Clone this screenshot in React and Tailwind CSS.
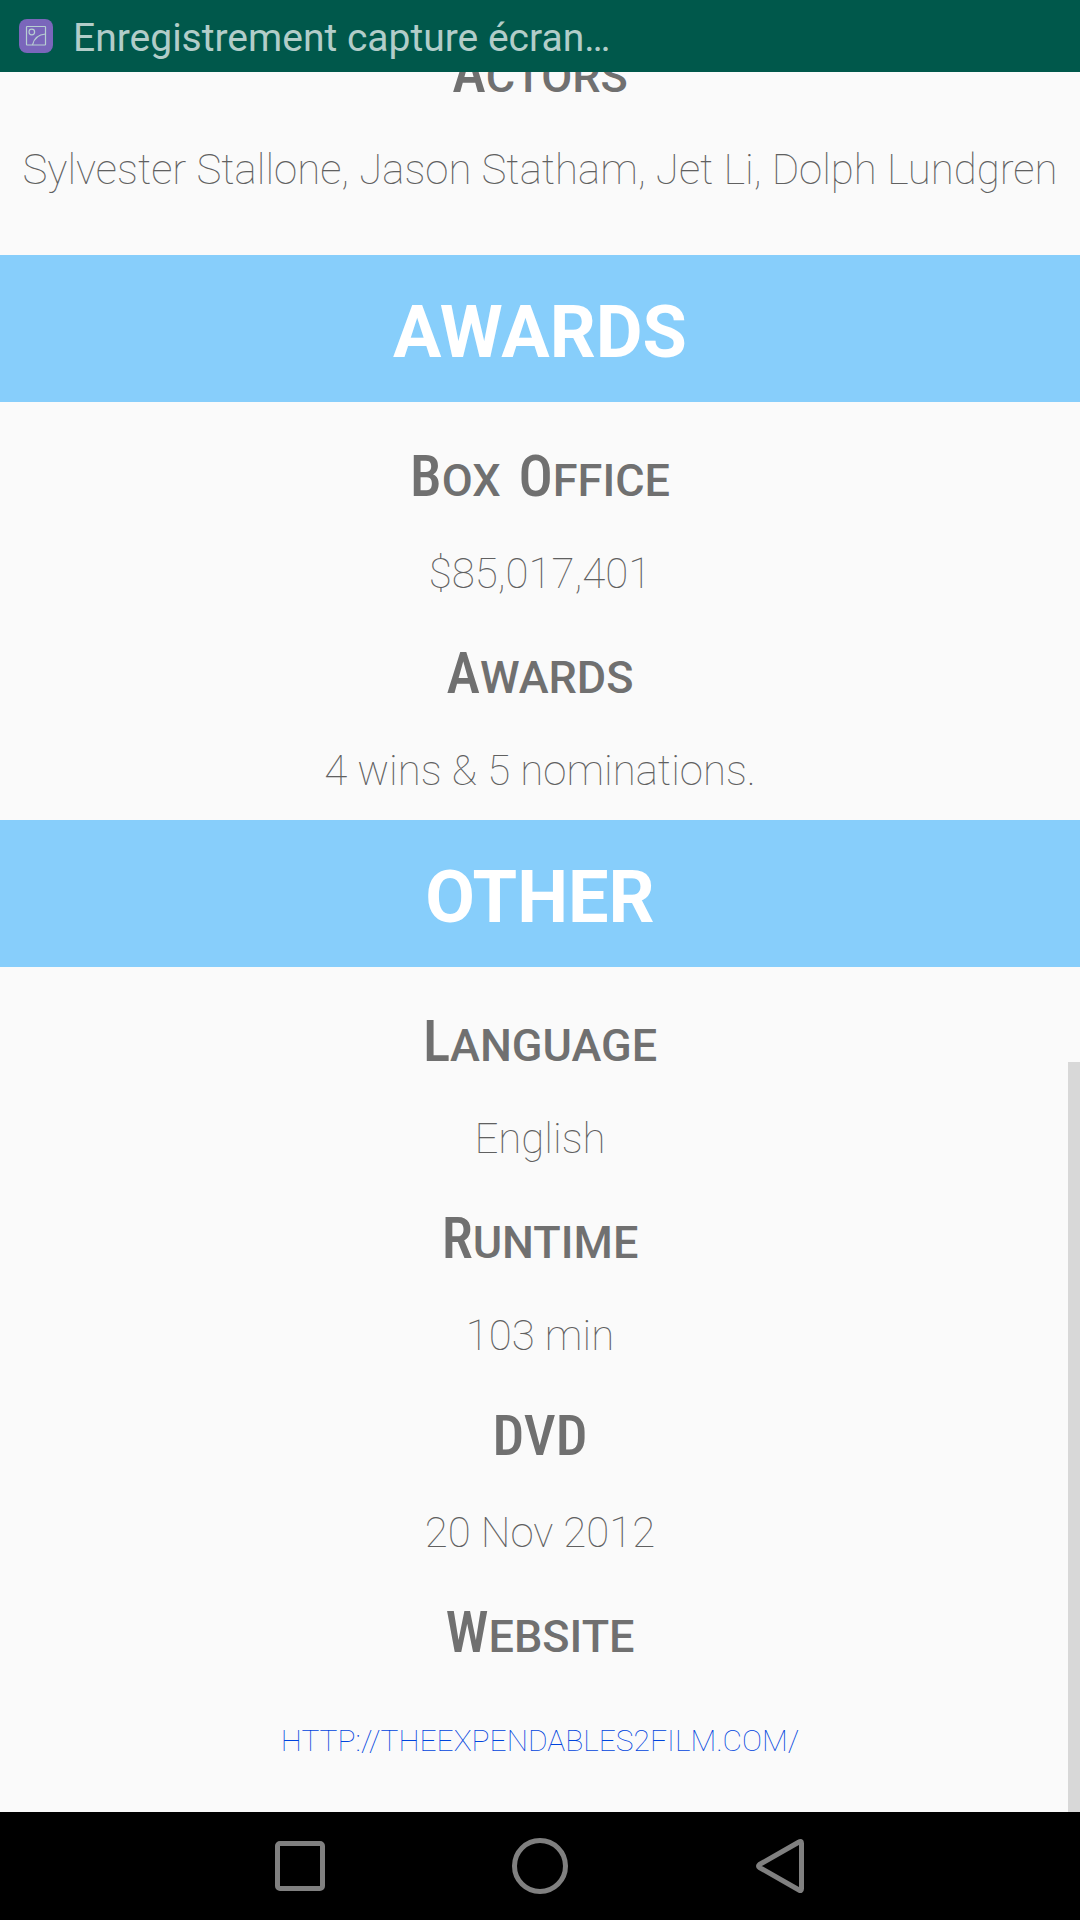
function ScreenshotBadge() {
  return (
    <svg width="34" height="34" viewBox="0 0 34 34" fill="none" aria-hidden="true">
      <rect width="34" height="34" rx="8" fill="#7a66bb" />
      <g stroke="#b7cfd2" strokeWidth="1.2">
        <rect x="7.5" y="7.5" width="19" height="18.5" rx="0.5" />
        <circle cx="12.8" cy="13" r="2.8" />
        <path d="M13.5 26C15 19.5 19.5 15.5 26.5 15" />
      </g>
    </svg>
  );
}

function StatusBar() {
  return (
    <header className="z-10 flex h-[72px] shrink-0 items-center gap-5 bg-[#00584b] pl-[19px]">
      <ScreenshotBadge />
      <span className="pt-1 text-[39px] leading-[48px] text-[#b2cdc9]">Enregistrement capture écran…</span>
    </header>
  );
}

function Banner({ children }) {
  return (
    <h2 className="bg-[#87cefb] pt-[38px] pb-[29px] text-center text-[72px] leading-[80px] font-bold text-white uppercase">
      {children}
    </h2>
  );
}

function Label({ children }) {
  return (
    <h3 className="pt-[47px] pb-[36px] text-center text-[45px] leading-[64px] font-medium text-[#707070]">
      {children}
    </h3>
  );
}

function SmallCaps({ children }) {
  const words = children.split(" ");
  return (
    <span className="uppercase">
      {words.map((word, i) => (
        <span key={word}>
          {i > 0 && <span className="text-[72px] leading-10"> </span>}
          <span className="inline-block leading-10 first-letter:font-['Roboto_Condensed'] first-letter:text-[57px] first-letter:leading-10">
            {word}
          </span>
        </span>
      ))}
    </span>
  );
}

function Value({ children }) {
  return <p className="text-center text-[42px] leading-[50px] font-thin text-[#606060]">{children}</p>;
}

function Field({ label, children }) {
  return (
    <>
      <Label>
        <SmallCaps>{label}</SmallCaps>
      </Label>
      <Value>{children}</Value>
    </>
  );
}

function NavBar() {
  const button = "flex h-full w-60 items-center justify-center";
  const icon = { width: 60, height: 60, viewBox: "0 0 60 60", fill: "none", stroke: "#808080", strokeWidth: 5 };
  return (
    <nav className="z-10 flex h-[108px] shrink-0 justify-center bg-black">
      <button type="button" aria-label="Recent apps" className={button}>
        <svg {...icon}>
          <rect x="7.5" y="7.5" width="45" height="45" rx="2.5" />
        </svg>
      </button>
      <button type="button" aria-label="Home" className={button}>
        <svg {...icon}>
          <circle cx="30" cy="30" r="25.5" />
        </svg>
      </button>
      <button type="button" aria-label="Back" className={button}>
        <svg {...icon} strokeLinejoin="round">
          <path d="M51.5 7.3Q51.5 4.5 49 6L9.5 28.5Q7.5 30 9.5 31.5L49 54Q51.5 55.5 51.5 52.7Z" />
        </svg>
      </button>
    </nav>
  );
}

export default function App() {
  return (
    <div className="flex h-screen flex-col bg-[#fafafa] font-['Roboto',sans-serif]">
      <StatusBar />
      <main className="relative flex-1 overflow-hidden">
        <section className="-mt-[74px] pb-[60px]">
          <Field label="Actors">Sylvester Stallone, Jason Statham, Jet Li, Dolph Lundgren</Field>
        </section>
        <section className="pb-6">
          <Banner>Awards</Banner>
          <Field label="Box Office">$85,017,401</Field>
          <Field label="Awards">4 wins &amp; 5 nominations.</Field>
        </section>
        <section>
          <Banner>Other</Banner>
          <Field label="Language">English</Field>
          <Field label="Runtime">103 min</Field>
          <Label>
            <span className="font-['Roboto_Condensed'] text-[56px] leading-10">DVD</span>
          </Label>
          <Value>20 Nov 2012</Value>
          <Label>
            <SmallCaps>Website</SmallCaps>
          </Label>
          <p className="pt-4 text-center">
            <a
              href="http://theexpendables2film.com/"
              className="inline-block text-[30px] leading-10 font-thin text-[#0044dd] uppercase"
            >
              http://theexpendables2film.com/
            </a>
          </p>
        </section>
        <div className="absolute right-0 bottom-0 h-[750px] w-3 bg-[#d8d8d8]" />
      </main>
      <NavBar />
    </div>
  );
}
